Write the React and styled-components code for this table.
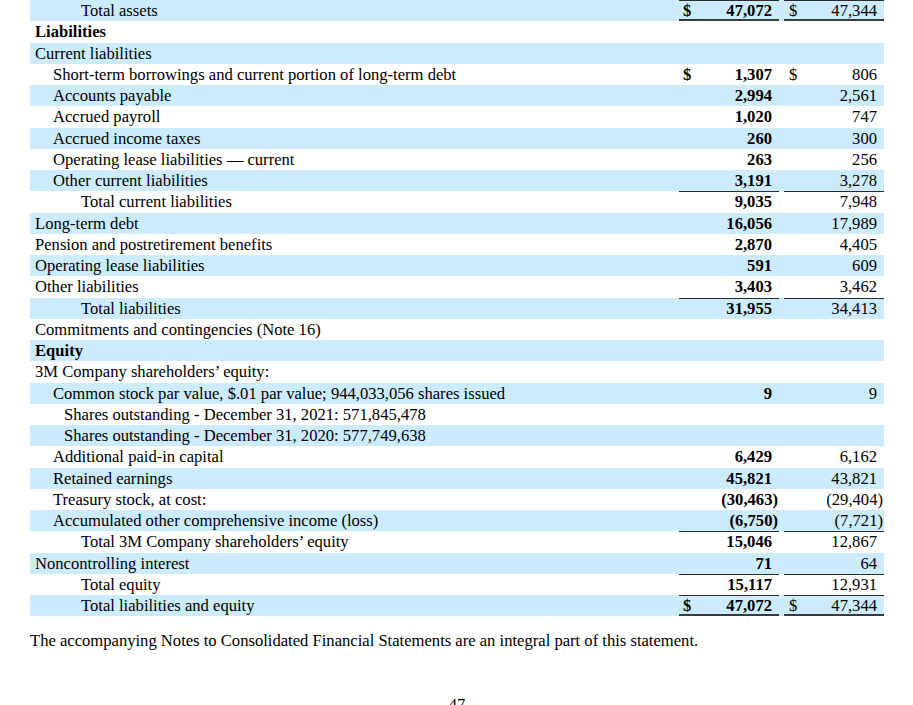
import React from "react";
import styled, { createGlobalStyle } from "styled-components";

const GlobalStyle = createGlobalStyle`
  body {
    margin: 0;
    background: #ffffff;
    font-family: "Liberation Serif", "Times New Roman", serif;
    color: #000000;
  }
`;

const Page = styled.div`
  width: 913px;
  height: 705px;
  overflow: hidden;
  padding-left: 30px;
  box-sizing: border-box;
`;

const Table = styled.div`
  width: 854px;
  display: flex;
  flex-direction: column;
`;

const Row = styled.div`
  display: grid;
  grid-template-columns: 649px 100px 5px 100px;
  height: 21.25px;
  line-height: 21.25px;
  font-size: 16.6px;
  background: ${({ shaded }) => (shaded ? "#ccecfd" : "transparent")};
`;

const indents = { 0: 5, 1: 23, 2: 34, 3: 51 };

const Label = styled.div`
  padding-left: ${({ level }) => indents[level]}px;
  font-weight: ${({ bold }) => (bold ? 700 : 400)};
  white-space: nowrap;
`;

const Amount = styled.div`
  display: flex;
  justify-content: space-between;
  padding-left: ${({ current }) => (current ? 4 : 5)}px;
  padding-right: 7px;
  font-weight: ${({ current }) => (current ? 700 : 400)};
  box-shadow: ${({ ruleTop, ruleBottom }) =>
    [
      ruleTop ? "inset 0 1px 0 #2b2b2b" : null,
      ruleBottom ? "inset 0 -2px 0 #3a3a3a" : null,
    ]
      .filter(Boolean)
      .join(", ") || "none"};
`;

const Value = styled.span`
  white-space: nowrap;
`;

const Paren = styled.span`
  margin-right: -6px;
`;

const Footnote = styled.p`
  margin: 14px 0 0;
  font-size: 16.6px;
  line-height: 21px;
`;

const PageNumber = styled.div`
  margin-top: 43px;
  width: 854px;
  text-align: center;
  font-size: 16.6px;
  line-height: 21px;
`;

const rows = [
  { label: "Total assets", level: 3, cur: "47,072", prev: "47,344", dollar: true, top: true, bottom: true },
  { label: "Liabilities", level: 0, bold: true },
  { label: "Current liabilities", level: 0 },
  { label: "Short-term borrowings and current portion of long-term debt", level: 1, cur: "1,307", prev: "806", dollar: true },
  { label: "Accounts payable", level: 1, cur: "2,994", prev: "2,561" },
  { label: "Accrued payroll", level: 1, cur: "1,020", prev: "747" },
  { label: "Accrued income taxes", level: 1, cur: "260", prev: "300" },
  { label: "Operating lease liabilities \u2014 current", level: 1, cur: "263", prev: "256" },
  { label: "Other current liabilities", level: 1, cur: "3,191", prev: "3,278" },
  { label: "Total current liabilities", level: 3, cur: "9,035", prev: "7,948", top: true },
  { label: "Long-term debt", level: 0, cur: "16,056", prev: "17,989" },
  { label: "Pension and postretirement benefits", level: 0, cur: "2,870", prev: "4,405" },
  { label: "Operating lease liabilities", level: 0, cur: "591", prev: "609" },
  { label: "Other liabilities", level: 0, cur: "3,403", prev: "3,462" },
  { label: "Total liabilities", level: 3, cur: "31,955", prev: "34,413", top: true },
  { label: "Commitments and contingencies (Note 16)", level: 0 },
  { label: "Equity", level: 0, bold: true },
  { label: "3M Company shareholders\u2019 equity:", level: 0 },
  { label: "Common stock par value, $.01 par value; 944,033,056 shares issued", level: 1, cur: "9", prev: "9" },
  { label: "Shares outstanding - December 31, 2021: 571,845,478", level: 2 },
  { label: "Shares outstanding - December 31, 2020: 577,749,638", level: 2 },
  { label: "Additional paid-in capital", level: 1, cur: "6,429", prev: "6,162" },
  { label: "Retained earnings", level: 1, cur: "45,821", prev: "43,821" },
  { label: "Treasury stock, at cost:", level: 1, cur: "(30,463)", prev: "(29,404)" },
  { label: "Accumulated other comprehensive income (loss)", level: 1, cur: "(6,750)", prev: "(7,721)" },
  { label: "Total 3M Company shareholders\u2019 equity", level: 3, cur: "15,046", prev: "12,867", top: true },
  { label: "Noncontrolling interest", level: 0, cur: "71", prev: "64" },
  { label: "Total equity", level: 3, cur: "15,117", prev: "12,931", top: true },
  { label: "Total liabilities and equity", level: 3, cur: "47,072", prev: "47,344", dollar: true, top: true, bottom: true },
];

function AmountCell({ value, dollar, current, top, bottom }) {
  const negative = value && value.startsWith("(");
  const text = negative ? value.slice(0, -1) : value;
  return (
    <Amount current={current} ruleTop={top} ruleBottom={bottom}>
      <span>{dollar ? "$" : ""}</span>
      <Value>
        {text}
        {negative && <Paren>)</Paren>}
      </Value>
    </Amount>
  );
}

export default function App() {
  return (
    <>
      <GlobalStyle />
      <Page>
        <Table>
          {rows.map((r, i) => (
            <Row key={i} shaded={i % 2 === 0}>
              <Label level={r.level} bold={r.bold}>
                {r.label}
              </Label>
              {r.cur ? (
                <AmountCell value={r.cur} dollar={r.dollar} current top={r.top} bottom={r.bottom} />
              ) : (
                <div />
              )}
              <div />
              {r.prev ? (
                <AmountCell value={r.prev} dollar={r.dollar} top={r.top} bottom={r.bottom} />
              ) : (
                <div />
              )}
            </Row>
          ))}
        </Table>
        <Footnote>
          The accompanying Notes to Consolidated Financial Statements are an integral part of this statement.
        </Footnote>
        <PageNumber>47</PageNumber>
      </Page>
    </>
  );
}
